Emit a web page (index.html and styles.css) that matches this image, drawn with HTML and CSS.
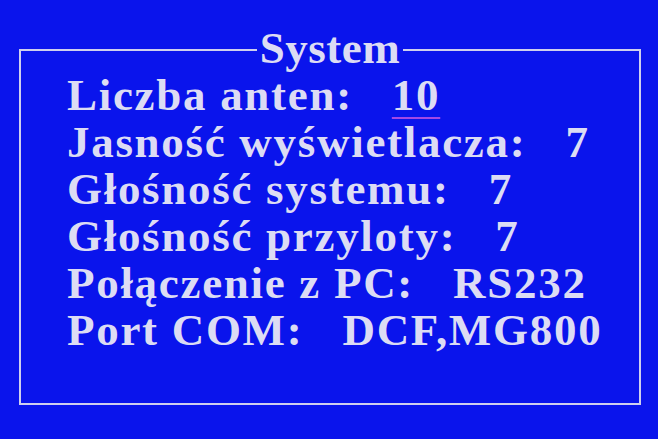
FILE: index.html
```html
<!DOCTYPE html>
<html lang="pl">
<head>
<meta charset="utf-8">
<title>System</title>
<link rel="stylesheet" href="styles.css">
</head>
<body>
<div class="screen">
  <fieldset class="panel">
    <legend class="title">System</legend>
    <div class="rows">
      <div class="row"><span class="label">Liczba anten:</span><span class="value selected">10</span></div>
      <div class="row"><span class="label">Jasność wyświetlacza:</span><span class="value">7</span></div>
      <div class="row"><span class="label">Głośność systemu:</span><span class="value">7</span></div>
      <div class="row"><span class="label">Głośność przyloty:</span><span class="value">7</span></div>
      <div class="row"><span class="label">Połączenie z PC:</span><span class="value">RS232</span></div>
      <div class="row"><span class="label">Port COM:</span><span class="value">DCF,MG800</span></div>
    </div>
  </fieldset>
</div>
</body>
</html>
```
FILE: styles.css
```css
html, body {
  margin: 0;
  padding: 0;
  background: #0a14ec;
}
body {
  width: 658px;
  height: 439px;
  overflow: hidden;
  font-family: "Liberation Serif", "Times New Roman", serif;
  font-weight: bold;
  color: #dcdcf4;
}
.screen {
  padding-top: 24px;
  padding-left: 19px;
}
.panel {
  box-sizing: border-box;
  width: 622px;
  height: 381px;
  margin: 0;
  padding: 0;
  border: 2px solid #cfcfee;
}
.title {
  margin: 0 auto;
  padding: 0 3px 3px;
  font-size: 45px;
  line-height: 48px;
  letter-spacing: 0.5px;
}
.rows {
  display: flex;
  flex-direction: column;
  margin-top: -3px;
  padding-left: 46px;
}
.row {
  display: flex;
  gap: 39px;
  height: 47px;
  font-size: 45px;
  line-height: 47px;
  letter-spacing: 1.7px;
  white-space: nowrap;
}
.selected {
  text-decoration: underline;
  text-decoration-color: #a448e6;
  text-decoration-thickness: 2px;
  text-underline-offset: 7px;
}
```
